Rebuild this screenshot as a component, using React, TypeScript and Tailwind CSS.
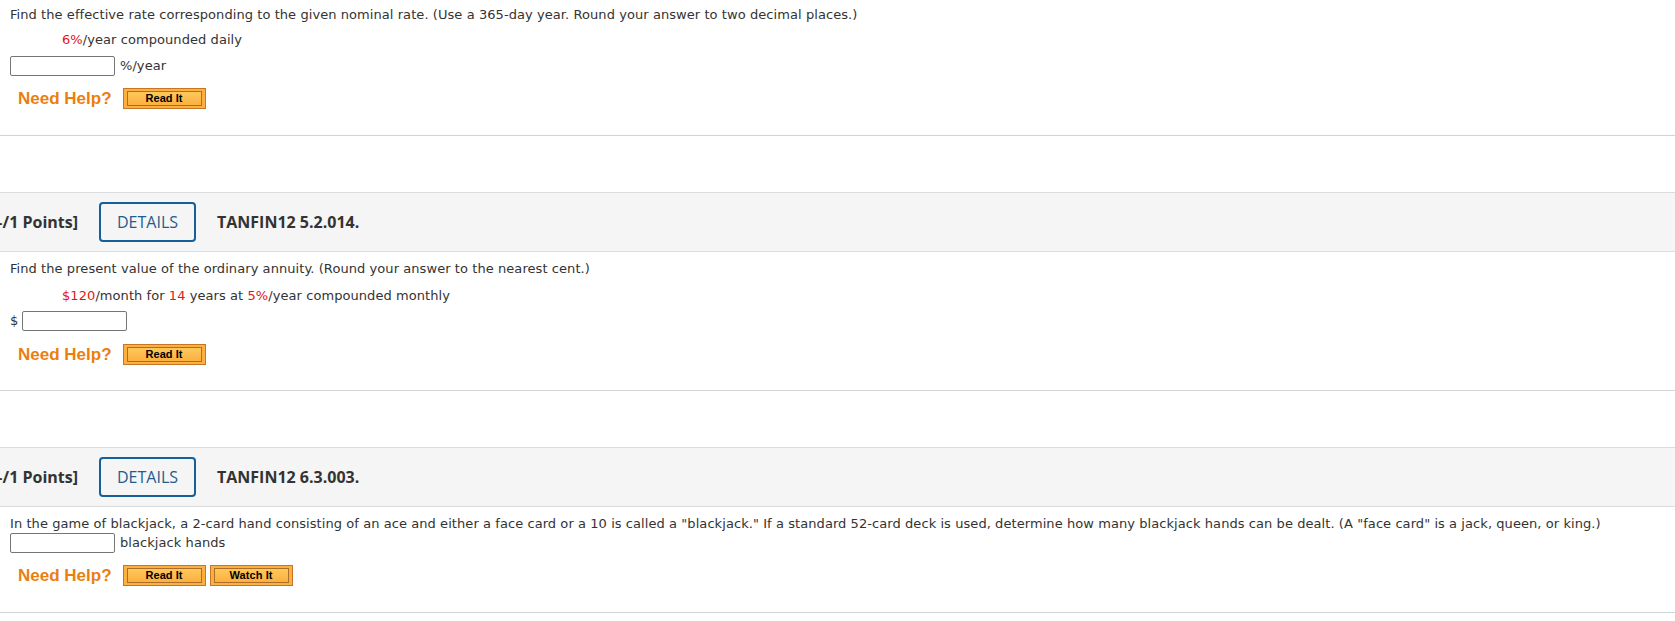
const body = "font-['DejaVu_Sans',Verdana,sans-serif] text-[13px] leading-4 tracking-[0.07px] text-[#333]";

const HelpButton = ({ label }: { label: string }) => (
  <button
    type="button"
    className="h-[21px] w-[83px] border border-[#c67628] bg-[#fbb03f] p-[2px_3px]"
  >
    <span className="flex h-full w-full items-center justify-center border border-[#b06d25] bg-gradient-to-b from-[#ffc85a] to-[#fbb03f] font-['Liberation_Sans',Arial,sans-serif] text-[11px] font-bold leading-none text-black">
      {label}
    </span>
  </button>
);

const NeedHelp = ({ watch, className }: { watch?: boolean; className: string }) => (
  <div className={`flex items-center pl-[8px] ${className}`}>
    <span className="mr-[11px] font-['Liberation_Sans',Arial,sans-serif] text-[17px] font-bold leading-none tracking-normal text-[#ea7f10]">
      Need Help?
    </span>
    <HelpButton label="Read It" />
    {watch && (
      <div className="ml-[4px]">
        <HelpButton label="Watch It" />
      </div>
    )}
  </div>
);

const Answer = ({ className }: { className?: string }) => (
  <input
    type="text"
    className={`h-[20px] w-[105px] rounded-[2px] border border-[#767676] bg-white ${className ?? ''}`}
  />
);

const Header = ({ code, className }: { code: string; className: string }) => (
  <div
    className={`flex h-[60px] items-center border-y border-[#dcdcdc] bg-[#f5f5f5] font-['Open_Sans',sans-serif] text-[16px] ${className}`}
  >
    <div className="flex w-[78px] shrink-0 justify-end whitespace-nowrap font-bold text-[#333]">
      [–/1 Points]
    </div>
    <div className="ml-[21px] flex h-[40px] w-[97px] items-center justify-center rounded-[4px] border-2 border-[#15609a] text-[#245c8e]">
      DETAILS
    </div>
    <div className="ml-[21px] font-bold text-[#333]">{code}</div>
  </div>
);

const Red = ({ children }: { children: string }) => <span className="text-[#e41414]">{children}</span>;

export default function App() {
  return (
    <div className="h-[621px] w-[1675px] overflow-hidden bg-white">
      <div className={`pl-[10px] pt-[7px] ${body}`}>
        <p>
          Find the effective rate corresponding to the given nominal rate. (Use a 365-day year. Round your answer to
          two decimal places.)
        </p>
        <p className="mt-[9px] pl-[52px]">
          <Red>6%</Red>/year compounded daily
        </p>
        <div className="mt-[8px] flex items-center gap-[5px]">
          <Answer />
          <span>%/year</span>
        </div>
        <NeedHelp className="mt-[12px]" />
      </div>
      <div className="mt-[26px] border-t border-[#d3d3d3]" />

      <Header code="TANFIN12 5.2.014." className="mt-[56px]" />
      <div className={`pl-[10px] pt-[9px] ${body}`}>
        <p>Find the present value of the ordinary annuity. (Round your answer to the nearest cent.)</p>
        <p className="mt-[11px] pl-[52px]">
          <Red>$120</Red>/month for <Red>14</Red> years at <Red>5%</Red>/year compounded monthly
        </p>
        <div className="mt-[7px] flex items-center gap-[4px]">
          <span>$</span>
          <Answer />
        </div>
        <NeedHelp className="mt-[13px]" />
      </div>
      <div className="mt-[25px] border-t border-[#d3d3d3]" />

      <Header code="TANFIN12 6.3.003." className="mt-[56px]" />
      <div className={`pl-[10px] pt-[9px] ${body}`}>
        <p>
          In the game of blackjack, a 2-card hand consisting of an ace and either a face card or a 10 is called a
          "blackjack." If a standard 52-card deck is used, determine how many blackjack hands can be dealt. (A "face
          card" is a jack, queen, or king.)
        </p>
        <div className="mt-[1px] flex items-center gap-[5px]">
          <Answer />
          <span>blackjack hands</span>
        </div>
        <NeedHelp watch className="mt-[12px]" />
      </div>
      <div className="mt-[26px] border-t border-[#d3d3d3]" />
    </div>
  );
}
